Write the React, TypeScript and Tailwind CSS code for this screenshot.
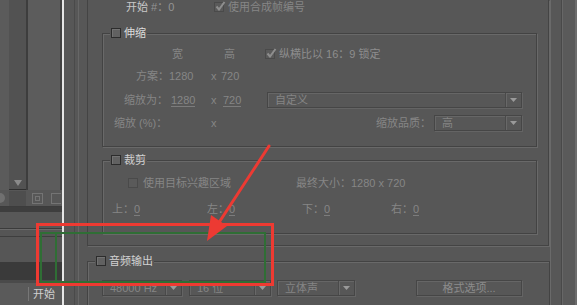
import React from 'react';

function Check({ checked = false, dim = false }: { checked?: boolean; dim?: boolean }) {
  return (
    <span
      className={`relative inline-flex h-[10px] w-[10px] shrink-0 items-center justify-center border ${
        dim ? 'border-[#4a4a4a] bg-[#5a5a5a]' : 'border-[#2c2c2c] bg-[#616161] shadow-[inset_1px_1px_0_#727272]'
      }`}
    >
      {checked && (
        <svg width="11" height="10" viewBox="0 0 11 10" className="absolute -top-[2px] left-0">
          <path d="M1.5 5.5 L4 8.5 L9.5 1" fill="none" stroke="#8e8e8e" strokeWidth="2" />
        </svg>
      )}
    </span>
  );
}

function Dropdown({ label, w, dim = true }: { label: string; w: string; dim?: boolean }) {
  return (
    <div
      className={`flex h-[16px] ${w} items-stretch border border-[#464646] shadow-[inset_1px_1px_0_#666,1px_1px_0_#646464]`}
    >
      <span className={`flex-1 truncate pl-[7px] leading-[14px] ${dim ? 'text-[#858585]' : 'text-[#bdbdbd]'}`}>
        {label}
      </span>
      <span className="flex w-[16px] items-center justify-center border-l border-[#4a4a4a] shadow-[inset_1px_0_0_#686868]">
        <svg width="7" height="4" viewBox="0 0 7 4">
          <path d="M0 0 H7 L3.5 4 Z" fill="#9a9a9a" />
        </svg>
      </span>
    </div>
  );
}

function Group({ title, active = false, className, children }: { title: string; active?: boolean; className: string; children: React.ReactNode }) {
  return (
    <fieldset
      className={`shrink-0 border border-[#434343] shadow-[inset_1px_1px_0_#696969,1px_1px_0_#696969] ${className}`}
    >
      <legend className="ml-[7px] flex h-[14px] items-center gap-[3px] bg-[#575757] px-[1px]">
        <Check />
        <span className={active ? 'text-[#dcdcdc]' : 'text-[#d2d2d2]'}>{title}</span>
      </legend>
      {children}
    </fieldset>
  );
}

function LeftPanel() {
  return (
    <div className="flex w-[62px] shrink-0 flex-col bg-[#575757]">
      <div className="flex h-[190px] shrink-0">
        <div className="w-[9px] bg-[#5b5b5b]" />
        <div className="flex w-[17px] flex-col justify-end bg-[#525252]">
          <div className="flex h-[14px] items-center justify-center border-b border-[#2f2f2f]">
            <svg width="8" height="6" viewBox="0 0 8 6">
              <path d="M0 0 H8 L4 6 Z" fill="#8a8a8a" />
            </svg>
          </div>
        </div>
        <div className="w-[2px] bg-[#3d3d3d]" />
        <div className="w-[32px] bg-[#5c5c5c]" />
        <div className="w-[2px] bg-[#424242]" />
      </div>
      <div className="flex h-[17px] shrink-0 items-center border-b border-[#3c3c3c]">
        <div className="h-[10px] w-[5px] rounded-r-full bg-[#707070]" />
        <div className="ml-[4px] h-[15px] w-[17px] bg-[#4e4e4e]" />
        <div className="ml-[6px] flex h-[11px] w-[11px] items-center justify-center border border-[#747474]">
          <div className="h-[5px] w-[5px] border border-[#747474]" />
        </div>
        <div className="ml-[8px] h-[11px] w-[10px] border border-r-0 border-[#747474]" />
      </div>
      <div className="h-[5px] shrink-0 bg-[#3e3e3e]" />
      <div className="h-[16px] shrink-0 bg-[#585858]" />
      <div className="h-px shrink-0 bg-[#3b3b3b]" />
      <div className="h-px shrink-0 bg-[#6a6a6a]" />
      <div className="h-[6px] shrink-0 bg-[#555]" />
      <div className="h-px shrink-0 bg-[#3e3e3e]" />
      <div className="h-[25px] shrink-0 bg-[#565656]" />
      <div className="h-[18px] shrink-0 bg-[#3a3a3a]" />
      <div className="h-[3px] shrink-0 bg-[#4a4a4a]" />
      <div className="flex flex-1 items-center bg-[#5a5a5a]">
        <div className="ml-[28px] h-[14px] w-px bg-[#777]" />
        <span className="ml-[4px] text-[#d0d0d0]">开始</span>
      </div>
    </div>
  );
}

export default function App() {
  return (
    <div className="relative flex h-[305px] w-[577px] overflow-hidden bg-[#575757] font-['Liberation_Sans','Noto_Sans_CJK_SC',sans-serif] text-[11px] leading-none text-[#868686]">
      <LeftPanel />
      <div className="w-[2px] shrink-0 bg-[#e6e6e6]" />
      <div className="w-[10px] shrink-0" />
      <div className="w-px shrink-0 bg-[#4a4a4a]" />
      <div className="w-[3px] shrink-0" />
      <div className="w-px shrink-0 bg-[#676767]" />
      <div className="w-[8px] shrink-0" />

      {/* main column */}
      <div className="flex w-[463px] shrink-0 flex-col">
        <div className="h-[246px] w-[462px] shrink-0 border-x border-b border-[#444] shadow-[1px_1px_0_#696969]">
          <div className="flex h-[14px] items-center pl-[38px]">
            <span className="w-[88px] text-[#c9c9c9]">
              开始 <span className="text-[#949494]">#：0</span>
            </span>
            <Check checked dim />
            <span className="ml-[4px]">使用合成帧编号</span>
          </div>

          <Group title="伸缩" active className="ml-[14px] mt-[12px] w-[435px] pb-[13px]">
            <div className="mt-[4px] flex h-[20px] items-center pl-[69px]">
              <span className="w-[52px]">宽</span>
              <span className="w-[41px]">高</span>
              <Check checked dim />
              <span className="ml-[4px] text-[#8e8e8e]">纵横比以 16：9 锁定</span>
            </div>
            <div className="mt-[2px] flex h-[20px] items-center pl-[33px]">
              <span className="w-[75px]">方案：1280</span>
              <span className="w-[10px]">x</span>
              <span>720</span>
            </div>
            <div className="mt-[4px] flex h-[20px] items-center pl-[21px]">
              <span className="w-[47px]">缩放为：</span>
              <span className="w-[40px]">
                <span className="border-b border-[#7c7c7c]">1280</span>
              </span>
              <span className="w-[12px]">x</span>
              <span className="w-[44px]">
                <span className="border-b border-[#7c7c7c]">720</span>
              </span>
              <Dropdown label="自定义" w="w-[255px]" />
            </div>
            <div className="mt-[3px] flex h-[20px] items-center pl-[11px]">
              <span className="w-[97px]">缩放 (%)：</span>
              <span className="w-[165px]">x</span>
              <span className="w-[58px]">缩放品质：</span>
              <Dropdown label="高" w="w-[88px]" />
            </div>
          </Group>

          <Group title="裁剪" className="ml-[14px] mt-[6px] w-[435px] pb-[14px]">
            <div className="mt-[6px] flex h-[20px] items-center pl-[25px]">
              <Check dim />
              <span className="ml-[5px] w-[153px]">使用目标兴趣区域</span>
              <span>最终大小：1280 x 720</span>
            </div>
            <div className="mt-[6px] flex h-[20px] items-center pl-[9px]">
              <span className="w-[95px]">
                上：<span className="border-b border-[#7c7c7c]">0</span>
              </span>
              <span className="w-[95px]">
                左：<span className="border-b border-[#7c7c7c]">0</span>
              </span>
              <span className="w-[89px]">
                下：<span className="border-b border-[#7c7c7c]">0</span>
              </span>
              <span>
                右：<span className="border-b border-[#7c7c7c]">0</span>
              </span>
            </div>
          </Group>
        </div>

        <Group title="音频输出" className="mt-[8px] w-[463px] pb-[20px]">
          <div className="mt-[12px] flex items-center pl-[14px]">
            <Dropdown label="48000 Hz" w="w-[80px]" />
            <div className="ml-[7px]">
              <Dropdown label="16 位" w="w-[82px]" />
            </div>
            <div className="ml-[6px]">
              <Dropdown label="立体声" w="w-[78px]" />
            </div>
            <div className="ml-[61px] flex h-[16px] w-[106px] items-center justify-center border border-[#464646] text-[#8c8c8c] shadow-[inset_1px_1px_0_#666,1px_1px_0_#646464]">
              格式选项...
            </div>
          </div>
        </Group>
      </div>

      {/* right edge strips */}
      <div className="w-px shrink-0 bg-[#6a6a6a]" />
      <div className="w-[10px] shrink-0" />
      <div className="w-px shrink-0 bg-[#494949]" />
      <div className="w-px shrink-0 bg-[#676767]" />
      <div className="w-[12px] shrink-0 bg-[#5a5a5a]" />
      <div className="flex-1 bg-[#6c6c6c]" />

      {/* annotation overlay */}
      <div className="pointer-events-none absolute left-[40px] top-[232px] h-[51px] w-[226px] border-2 border-[#2f6e35]">
        <div className="ml-[13px] h-full w-[2px] bg-[#2f6e35]" />
      </div>
      <div className="pointer-events-none absolute left-[36px] top-[223px] h-[63px] w-[238px] border-[3px] border-[#ee3a32]" />
      <svg className="pointer-events-none absolute left-0 top-0" width="577" height="305" viewBox="0 0 577 305">
        <line x1="269" y1="146" x2="218" y2="224" stroke="#ec3a33" strokeWidth="3" strokeLinecap="round" />
        <polygon points="207,241 211,215 227,226" fill="#ec3a33" />
      </svg>
    </div>
  );
}
